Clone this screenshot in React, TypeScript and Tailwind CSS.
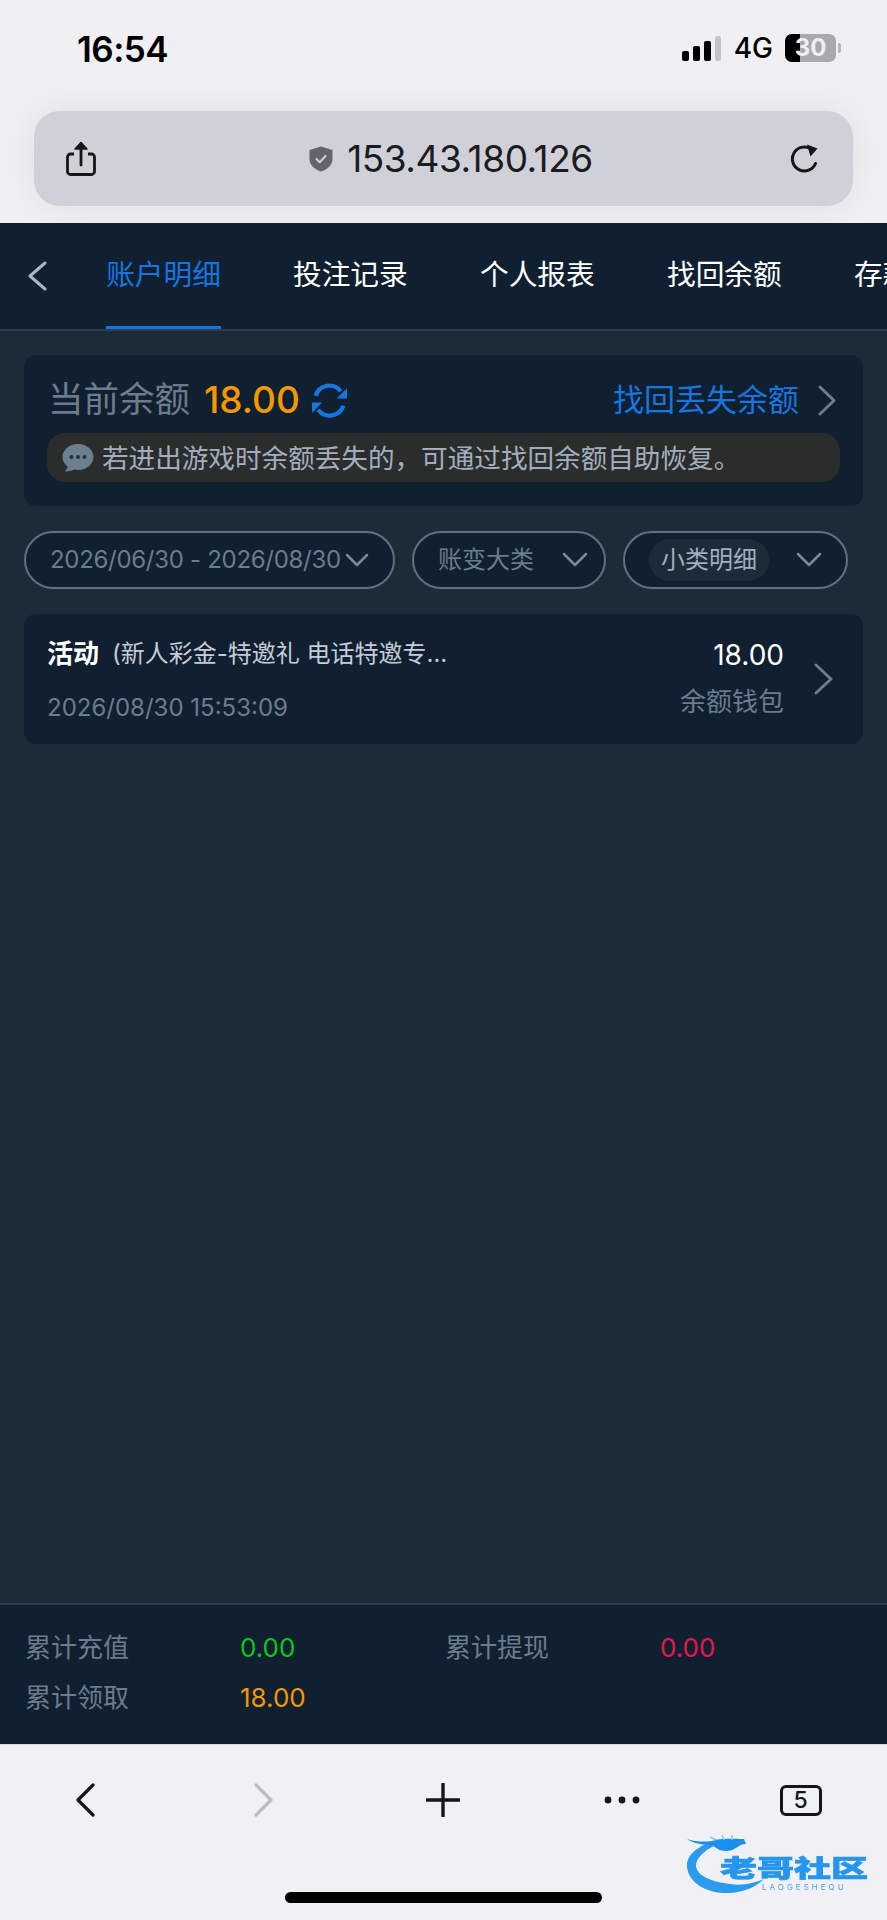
import React from "react";

const Chevron = ({ dir = "right", color = "#6b7c8c", w = 18, h = 32, sw = 3 }: { dir?: "right" | "left" | "down"; color?: string; w?: number; h?: number; sw?: number }) => {
  const d = dir === "right" ? `M2 2 L${w - 3} ${h / 2} L2 ${h - 2}` : dir === "left" ? `M${w - 2} 2 L3 ${h / 2} L${w - 2} ${h - 2}` : `M2 2 L${w / 2} ${h - 3} L${w - 2} 2`;
  return (
    <svg width={w} height={h} viewBox={`0 0 ${w} ${h}`} fill="none" className="shrink-0">
      <path d={d} stroke={color} strokeWidth={sw} strokeLinecap="round" strokeLinejoin="round" />
    </svg>
  );
};

const ShareIcon = () => (
  <svg width="32" height="36" viewBox="0 0 32 36" fill="none">
    <path d="M9 13H5.5A3 3 0 0 0 2.5 16V30.5A3 3 0 0 0 5.5 33.5H26.5A3 3 0 0 0 29.5 30.5V16A3 3 0 0 0 26.5 13H23" stroke="#15161a" strokeWidth="2.8" />
    <path d="M16 24V3" stroke="#15161a" strokeWidth="2.8" strokeLinecap="round" />
    <path d="M10 8L16 1.5L22 8Z" fill="#15161a" stroke="#15161a" strokeWidth="1.5" strokeLinejoin="round" />
  </svg>
);

const ShieldIcon = () => (
  <svg width="24" height="26" viewBox="0 0 24 26">
    <path d="M12 0.5L23.5 4V13C23.5 19 18.5 23.5 12 25.5C5.5 23.5 0.5 19 0.5 13V4Z" fill="#63646c" />
    <path d="M7.5 13L10.8 16.2L16.5 10" fill="none" stroke="#d0d0d8" strokeWidth="2" strokeLinecap="round" strokeLinejoin="round" />
  </svg>
);

const ReloadIcon = () => (
  <svg width="30" height="30" viewBox="0 0 30 30" fill="none">
    <path d="M25.5 19.5A12 12 0 1 1 20.5 4.6" stroke="#15161a" strokeWidth="3" strokeLinecap="round" />
    <path d="M17 0.5L27.5 4.5L20.5 12.5Z" fill="#15161a" />
  </svg>
);

const RefreshBlue = () => (
  <svg width="37" height="37" viewBox="0 0 36 36" fill="none">
    <path d="M4.5 13.5A14 14 0 0 1 29 9" stroke="#1576e0" strokeWidth="4.2" />
    <path d="M35 6V16H25Z" fill="#1576e0" />
    <path d="M31.5 23A14 14 0 0 1 7 27" stroke="#1576e0" strokeWidth="4.2" />
    <path d="M1 30V20H11Z" fill="#1576e0" />
  </svg>
);

const BubbleIcon = () => (
  <svg width="32" height="28" viewBox="0 0 32 28">
    <path d="M16 0C7.4 0 0.5 5.7 0.5 13C0.5 17 2.7 20.5 5.8 22.7L3 27.5C7 27.5 10.2 26.3 12 25.5C13.3 25.8 14.6 26 16 26C24.6 26 31.5 20.2 31.5 13C31.5 5.7 24.6 0 16 0Z" fill="#6b7f8f" />
    <circle cx="9.5" cy="13" r="2" fill="#26313a" />
    <circle cx="16" cy="13" r="2" fill="#26313a" />
    <circle cx="22.5" cy="13" r="2" fill="#26313a" />
  </svg>
);

const tabs = ["账户明细", "投注记录", "个人报表", "找回余额", "存款记录"];

export default function App() {
  return (
    <div className="relative flex h-[1920px] w-[887px] flex-col overflow-hidden bg-[#1c2b38] font-['Inter','Noto_Sans_CJK_SC',sans-serif]">
      {/* browser top */}
      <div className="h-[223px] shrink-0 bg-[#efeff4] px-[34px]">
        <div className="flex h-[111px] items-start justify-between pt-[27px]">
          <span className="pl-[43px] text-[35px] leading-[44px] font-semibold tracking-[-0.5px] text-black">16:54</span>
          <div className="flex items-center pt-[5px] pr-[12px]">
            <div className="flex items-end gap-[4px]">
              <div className="h-[10px] w-[7px] rounded-[2px] bg-black" />
              <div className="h-[15px] w-[7px] rounded-[2px] bg-black" />
              <div className="h-[20px] w-[7px] rounded-[2px] bg-black" />
              <div className="h-[25px] w-[6px] rounded-[2px] bg-[#c4c4c6]" />
            </div>
            <span className="ml-[13px] text-[28px] leading-[32px] font-medium text-black">4G</span>
            <div className="relative ml-[12px] flex h-[28px] w-[51px] items-center justify-center overflow-hidden rounded-[7px] bg-[#a9a9ab]">
              <div className="absolute top-0 left-0 h-full w-[15px] bg-black" />
              <span className="relative text-[24px] leading-[28px] font-bold text-[#efeff4]">30</span>
            </div>
            <div className="ml-[2px] h-[10px] w-[3px] rounded-r-[2px] bg-[#b5b5b7]" />
          </div>
        </div>
        <div className="flex h-[95px] items-center justify-between rounded-[26px] bg-[#d0d0d8] pr-[16px] pl-[31px] shadow-[0_0_36px_rgba(0,0,0,0.07)]">
          <ShareIcon />
          <div className="ml-[15px] flex items-center gap-[14px]">
            <ShieldIcon />
            <span className="text-[37px] leading-[44px] tracking-[-0.45px] text-[#1b1c20]">153.43.180.126</span>
          </div>
          <div className="pr-[17px]">
            <ReloadIcon />
          </div>
        </div>
      </div>

      {/* tab bar */}
      <div className="flex h-[108px] shrink-0 items-stretch overflow-hidden border-b-[2px] border-[#2c3e4c] bg-[#102030]">
        <div className="flex w-[106px] shrink-0 items-center pl-[27px]">
          <Chevron dir="left" color="#a9b6c6" w={20} h={30} />
        </div>
        <div className="flex gap-[72px]">
          {tabs.map((t, i) => (
            <div
              key={t}
              className={
                i === 0
                  ? "flex h-full w-[115px] shrink-0 items-center justify-center border-b-[3px] border-[#1576e0] text-[28.7px] whitespace-nowrap text-[#1576e0]"
                  : "flex h-full w-[115px] shrink-0 items-center justify-start border-b-[3px] border-transparent text-[28.7px] whitespace-nowrap text-white"
              }
            >
              {t}
            </div>
          ))}
        </div>
      </div>

      {/* content */}
      <div className="flex flex-1 flex-col px-[24px] pt-[24px]">
        <div className="h-[151px] rounded-[12px] bg-[#102030] pt-[18px] pr-[23px] pl-[23px]">
          <div className="flex h-[54px] items-center">
            <span className="ml-[1px] text-[35.5px] leading-[44px] text-[#6b7c8c]">当前余额</span>
            <span className="ml-[14px] text-[37px] leading-[44px] font-medium text-[#f39800]">18.00</span>
            <div className="ml-[11px]">
              <RefreshBlue />
            </div>
            <span className="ml-auto text-[31px] leading-[44px] text-[#1576e0]">找回丢失余额</span>
            <div className="mr-[3px] ml-[19px]">
              <Chevron color="#6b7c8c" w={19} h={31} />
            </div>
          </div>
          <div className="mt-[6px] flex h-[49px] items-center rounded-[18px] bg-[#2a2d2b] pl-[15px]">
            <BubbleIcon />
            <span className="ml-[8px] text-[26.6px] leading-[36px] whitespace-nowrap text-[#a3adc0]">若进出游戏时余额丢失的，可通过找回余额自助恢复。</span>
          </div>
        </div>

        <div className="mt-[25px] flex h-[58px] items-stretch">
          <div className="flex w-[371px] items-center justify-between rounded-full border-[2px] border-[#60707f] bg-[#102030] pr-[24px] pl-[24px]">
            <span className="text-[24px] tracking-[-0.3px] whitespace-nowrap text-[#6b7c8c]">2026/06/30 - 2026/08/30</span>
            <Chevron dir="down" color="#7c8b99" w={24} h={15} sw={2.5} />
          </div>
          <div className="ml-[17px] flex w-[194px] items-center justify-between rounded-full border-[2px] border-[#60707f] bg-[#102030] pr-[16px] pl-[24px]">
            <span className="text-[24px] whitespace-nowrap text-[#6b7c8c]">账变大类</span>
            <Chevron dir="down" color="#7c8b99" w={26} h={16} sw={2.5} />
          </div>
          <div className="ml-[17px] flex w-[225px] items-center justify-between rounded-full border-[2px] border-[#60707f] bg-[#102030] pr-[24px] pl-[24px]">
            <span className="rounded-[22px] bg-[#1c2b38] px-[12px] py-[3px] text-[24px] leading-[36px] whitespace-nowrap text-[#a3adc0]">小类明细</span>
            <Chevron dir="down" color="#7c8b99" w={26} h={16} sw={2.5} />
          </div>
        </div>

        <div className="mt-[25px] flex h-[130px] items-center justify-between rounded-[12px] bg-[#102030] pr-[29px] pl-[23px]">
          <div className="flex flex-col">
            <div className="flex items-center">
              <span className="text-[26px] leading-[40px] font-bold text-white">活动</span>
              <span className="ml-[13px] w-[350px] truncate text-[24px] leading-[40px] text-[#c5ccd8]">(新人彩金-特邀礼 电话特邀专属活动彩金奖励)</span>
            </div>
            <span className="mt-[18px] text-[24px] leading-[32px] text-[#6b7c8c]">2026/08/30 15:53:09</span>
          </div>
          <div className="ml-auto flex flex-col items-end pb-[3px]">
            <span className="text-[28px] leading-[40px] text-white">18.00</span>
            <span className="mt-[9px] text-[26px] leading-[36px] text-[#6b7c8c]">余额钱包</span>
          </div>
          <div className="ml-[30px]">
            <Chevron color="#6b7c8c" w={20} h={32} />
          </div>
        </div>
      </div>

      {/* totals */}
      <div className="h-[141px] shrink-0 border-t-[2px] border-[#2c3e4c] bg-[#102030] px-[25px] pt-[17px]">
        <div className="flex h-[50px] items-center">
          <span className="w-[215px] text-[26px] text-[#6b7c8c]">累计充值</span>
          <span className="w-[205px] text-[26px] text-[#12c41e]">0.00</span>
          <span className="w-[215px] text-[26px] text-[#6b7c8c]">累计提现</span>
          <span className="text-[26px] text-[#e8174d]">0.00</span>
        </div>
        <div className="flex h-[50px] items-center">
          <span className="w-[215px] text-[26px] text-[#6b7c8c]">累计领取</span>
          <span className="text-[26px] text-[#f39800]">18.00</span>
        </div>
      </div>

      {/* browser bottom */}
      <div className="relative flex h-[176px] shrink-0 flex-col border-t border-[#d8d8dc] bg-[#f0f0f5]">
        <div className="ml-[-5px] flex h-[110px] w-[895px] shrink-0 items-center">
          <div className="flex w-[179px] justify-center">
            <Chevron dir="left" color="#15161a" w={20} h={34} sw={3.2} />
          </div>
          <div className="flex w-[179px] justify-center">
            <Chevron dir="right" color="#bdbdc2" w={20} h={34} sw={3.2} />
          </div>
          <div className="flex w-[179px] justify-center">
            <svg width="34" height="34" viewBox="0 0 34 34">
              <path d="M17 1V33M1 17H33" stroke="#15161a" strokeWidth="3.4" strokeLinecap="round" />
            </svg>
          </div>
          <div className="flex w-[179px] justify-center">
            <svg width="36" height="8" viewBox="0 0 36 8">
              <circle cx="4" cy="4" r="3.4" fill="#15161a" />
              <circle cx="18" cy="4" r="3.4" fill="#15161a" />
              <circle cx="32" cy="4" r="3.4" fill="#15161a" />
            </svg>
          </div>
          <div className="flex w-[179px] justify-center">
            <div className="flex h-[31px] w-[42px] items-center justify-center rounded-[6px] border-[3px] border-[#15161a] text-[23px] leading-none font-medium text-[#15161a]">5</div>
          </div>
        </div>
        <div className="mt-[37px] ml-[285px] h-[11px] w-[317px] rounded-full bg-black" />

        {/* watermark */}
        <div className="absolute top-[84px] left-[684px] h-[72px] w-[190px] blur-[0.7px]">
          <svg width="100" height="70" viewBox="0 0 100 70" fill="none" className="absolute top-0 left-0">
            <path d="M24 14C10 20 2 28 3 38C5 56 26 65 46 64C60 63 72 58 80 50C70 54 58 57 46 55C28 53 13 47 12 37C12 29 20 22 30 17Z" fill="#2a9bee" />
            <path d="M3 10C12 13 20 13 28 12C36 9 46 10 60 10L62 15C54 15 52 22 42 22C36 22 32 19 28 16C18 16 9 14 3 10Z" fill="#1b8fee" />
            <path d="M26 8L32 11M38 6L40 11M48 6L48 11" stroke="#8cc8f4" strokeWidth="1.5" />
          </svg>
          <span className="absolute top-[18px] left-[36px] origin-center scale-y-[0.66] text-[37px] leading-[42px] font-black whitespace-nowrap text-[#2596ee] [-webkit-text-stroke:1px_#2596ee]">老哥社区</span>
          <span className="absolute top-[53px] left-[78px] text-[8px] leading-[10px] tracking-[3px] text-[#4aa5e8]">LAOGESHEQU</span>
        </div>
      </div>
    </div>
  );
}
